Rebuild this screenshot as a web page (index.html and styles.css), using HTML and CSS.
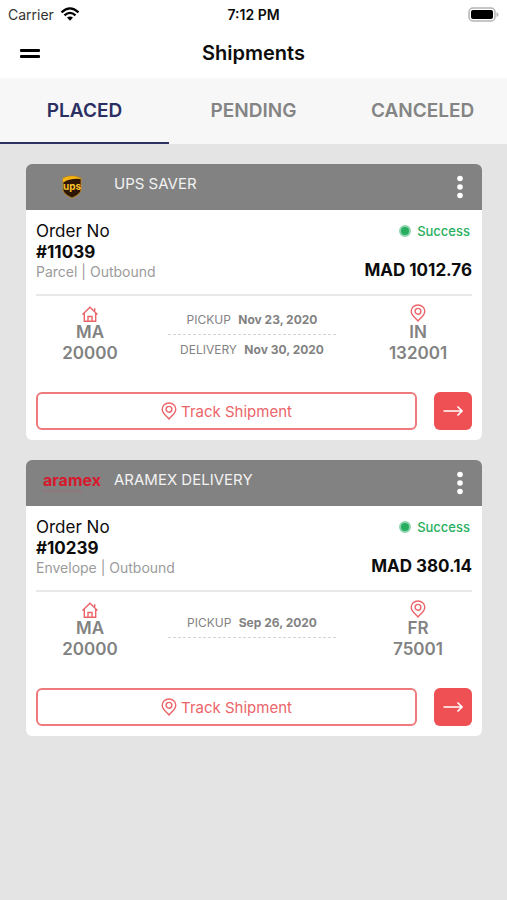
FILE: index.html
```html
<!DOCTYPE html>
<html lang="en">
<head>
<meta charset="utf-8">
<meta name="viewport" content="width=device-width, initial-scale=1">
<title>Shipments</title>
<link rel="stylesheet" href="styles.css">
</head>
<body>
<svg class="sprite" aria-hidden="true">
  <symbol id="pin" viewBox="0 0 16 18"><path d="M8 17C5 13.700 1.200 11 1.200 7.200a6.800 6.200 0 0 1 13.600 0C14.800 11 11 13.700 8 17Z"/><circle cx="8" cy="7.300" r="2.900"/></symbol>
  <symbol id="house" viewBox="0 0 18 16"><path d="M1.500 8.500 9 1.300l7.500 7.200M3.300 7v8.200h11.400V7M13.700 5V2.300M7 15v-4.500h4V15"/></symbol>
  <symbol id="arrow" viewBox="0 0 20 12"><path d="M0.500 6h18.500M14.500 1.500 19 6l-4.500 4.500"/></symbol>
  <symbol id="dots" viewBox="0 0 6 24"><circle cx="3" cy="3.500" r="2.800"/><circle cx="3" cy="12" r="2.800"/><circle cx="3" cy="20.500" r="2.800"/></symbol>
</svg>

<div class="status-bar">
  <div class="carrier">Carrier
    <svg width="20" height="14" viewBox="0 0 20 14" aria-hidden="true">
      <path d="M1.500 5.300Q10-2.500 18.500 5.300M4.500 8.300q5.500-4.800 11 0" fill="none" stroke="#000" stroke-width="2.300"/>
      <path d="M7 10.600q3-2.400 6 0L10 13.700Z"/>
    </svg>
  </div>
  <time class="clock">7:12 PM</time>
  <svg class="battery" width="31" height="15" viewBox="0 0 31 15" aria-hidden="true">
    <rect x="1" y="1" width="26" height="13" rx="4" fill="#fff" stroke="#b4b4b4" stroke-width="1.500"/>
    <rect x="3" y="3" width="22" height="9" rx="2"/>
    <path d="M28.500 5v5q2-1 2-2.500t-2-2.500Z" fill="#b4b4b4"/>
  </svg>
</div>

<header class="app-header">
  <button class="menu" type="button" aria-label="Menu"><span></span><span></span></button>
  <h1>Shipments</h1>
</header>

<nav class="tabs">
  <a class="tab active" href="#placed">PLACED</a>
  <a class="tab" href="#pending">PENDING</a>
  <a class="tab" href="#canceled">CANCELED</a>
</nav>

<main class="list">
  <article class="card">
    <header class="card-head">
      <div class="logo">
        <svg width="20" height="24" viewBox="0 0 20 24" role="img" aria-label="UPS">
          <path d="M1 3Q10-1 19 3v11.500q0 4.500-9 8.500-9-4-9-8.500Z" fill="#2e1605" stroke="#c98d14" stroke-width="0.800"/>
          <path d="M1.200 7.500V3.200Q10-.500 18.800 3.200 8-.500 1.200 7.500Z" fill="#f5b412"/>
          <path d="M1.200 7.500V3.200Q10-.500 18.800 3.200v.800Q8 3 1.200 7.500Z" fill="#f5b412"/>
          <text class="ups" x="10" y="15" text-anchor="middle">ups</text>
        </svg>
      </div>
      <h2>UPS SAVER</h2>
      <button class="more" type="button" aria-label="More options"><svg width="6" height="24"><use href="#dots"/></svg></button>
    </header>
    <div class="card-body">
      <div class="summary">
        <div>
          <p class="order">Order No</p>
          <p class="number">#11039</p>
          <p class="kind">Parcel | Outbound</p>
        </div>
        <div class="result">
          <p class="state"><span class="dot"></span>Success</p>
          <p class="price">MAD 1012.76</p>
        </div>
      </div>
      <div class="route">
        <div class="place"><svg width="18" height="16"><use href="#house"/></svg><p>MA</p><p>20000</p></div>
        <div class="dates">
          <p>PICKUP <b>Nov 23, 2020</b></p>
          <p>DELIVERY <b>Nov 30, 2020</b></p>
        </div>
        <div class="place"><svg width="16" height="18"><use href="#pin"/></svg><p>IN</p><p>132001</p></div>
      </div>
      <div class="actions">
        <button class="track" type="button"><svg width="16" height="18" aria-hidden="true"><use href="#pin"/></svg>Track Shipment</button>
        <button class="go" type="button" aria-label="Open shipment"><svg width="20" height="12"><use href="#arrow"/></svg></button>
      </div>
    </div>
  </article>

  <article class="card">
    <header class="card-head">
      <div class="logo">
        <svg width="68" height="24" viewBox="0 0 68 24" role="img" aria-label="Aramex">
          <text class="aramex" x="34" y="15" text-anchor="middle">aramex</text>
          <path d="M5 20h40" stroke="#9c6a70" stroke-width="1" stroke-dasharray="3 1"/>
        </svg>
      </div>
      <h2>ARAMEX DELIVERY</h2>
      <button class="more" type="button" aria-label="More options"><svg width="6" height="24"><use href="#dots"/></svg></button>
    </header>
    <div class="card-body">
      <div class="summary">
        <div>
          <p class="order">Order No</p>
          <p class="number">#10239</p>
          <p class="kind">Envelope | Outbound</p>
        </div>
        <div class="result">
          <p class="state"><span class="dot"></span>Success</p>
          <p class="price">MAD 380.14</p>
        </div>
      </div>
      <div class="route">
        <div class="place"><svg width="18" height="16"><use href="#house"/></svg><p>MA</p><p>20000</p></div>
        <div class="dates single">
          <p>PICKUP <b>Sep 26, 2020</b></p>
        </div>
        <div class="place"><svg width="16" height="18"><use href="#pin"/></svg><p>FR</p><p>75001</p></div>
      </div>
      <div class="actions">
        <button class="track" type="button"><svg width="16" height="18" aria-hidden="true"><use href="#pin"/></svg>Track Shipment</button>
        <button class="go" type="button" aria-label="Open shipment"><svg width="20" height="12"><use href="#arrow"/></svg></button>
      </div>
    </div>
  </article>
</main>
</body>
</html>
```
FILE: styles.css
```css
* { box-sizing: border-box; }
body {
  margin: 0;
  background: #e4e4e4;
  color: #0c0c0c;
  font-family: Inter, "Liberation Sans", sans-serif;
}
h1, h2, p { margin: 0; font-weight: 400; }
button { padding: 0; border: 0; background: none; font: inherit; cursor: pointer; }
svg { display: block; }
.sprite { display: none; }

.status-bar {
  display: grid;
  grid-template-columns: 1fr auto 1fr;
  align-items: center;
  height: 28px;
  padding: 0 8px;
  background: #fff;
  font-size: 14px;
}
.carrier { display: flex; align-items: center; gap: 6px; color: #333; }
.clock { font-weight: 600; }
.battery { justify-self: end; }

.app-header {
  display: grid;
  grid-template-columns: 20px 1fr 20px;
  align-items: center;
  height: 50px;
  padding: 0 20px;
  background: #fff;
}
.menu { display: grid; gap: 3px; }
.menu span { height: 3px; border-radius: 1px; background: #000; }
h1 { font-size: 20px; font-weight: 600; text-align: center; }

.tabs {
  display: grid;
  grid-template-columns: repeat(3, 1fr);
  height: 66px;
  background: #f7f7f7;
}
.tab {
  display: grid;
  place-items: center;
  border-bottom: 2px solid transparent;
  color: #848484;
  font-size: 19px;
  font-weight: 600;
  text-decoration: none;
}
.tab.active { border-bottom-color: #2b3263; color: #2b2f62; }

.list { display: grid; gap: 20px; padding: 20px 25px 20px 26px; }
.card { overflow: hidden; border-radius: 6px; background: #fff; }
.card-head {
  display: grid;
  grid-template-columns: 76px 1fr 24px;
  align-items: center;
  gap: 4px;
  height: 46px;
  padding: 0 10px 0 8px;
  background: #828282;
}
.logo { display: grid; place-items: center; }
.ups { fill: #f8c22c; font-size: 10px; font-weight: 700; }
.aramex { fill: #d8182c; font-size: 16px; font-weight: 700; }
h2 { padding-bottom: 6px; color: #f2f2f2; font-size: 15px; line-height: 18px; }
.more { display: grid; place-items: center; height: 32px; fill: #fff; }

.card-body { padding: 10px; }
.summary {
  display: flex;
  justify-content: space-between;
  padding: 1px 0 13px;
  border-bottom: 2px solid #e8e8e8;
}
.order, .number { font-size: 17px; line-height: 21px; }
.number { font-weight: 700; }
.kind { color: #9b9b9b; font-size: 14px; line-height: 18px; }
.result {
  display: flex;
  flex-direction: column;
  justify-content: space-between;
  align-items: flex-end;
}
.state {
  display: flex;
  align-items: center;
  gap: 6px;
  padding-right: 2px;
  color: #27ae60;
  font-size: 13px;
  font-weight: 500;
  line-height: 20px;
}
.dot { width: 12px; height: 12px; border: 2px solid #8dd5ac; border-radius: 50%; background: #27ae60; }
.price { font-size: 17px; font-weight: 700; line-height: 22px; }

.route {
  display: grid;
  grid-template-columns: 108px 1fr 108px;
  gap: 24px;
  height: 96px;
  padding-top: 8px;
}
.place {
  display: grid;
  grid-template-rows: 18px 21px 21px;
  justify-items: center;
  align-items: end;
  align-content: start;
  color: #828282;
  font-size: 17px;
  line-height: 21px;
  text-align: center;
}
.place svg, .track svg { fill: none; stroke: #eb6468; stroke-width: 1.4; }
.place p { font-weight: 600; }
.dates { padding: 1px 4px 0 0; color: #828282; font-size: 12px; text-align: center; }
.dates.single { padding-top: 8px; }
.dates p { line-height: 29px; white-space: nowrap; }
.dates p:first-child { border-bottom: 1px dashed #d4d4d4; }
.dates b { margin-left: 4px; }

.actions { display: flex; gap: 17px; }
.track {
  display: flex;
  flex: 1;
  justify-content: center;
  align-items: center;
  gap: 4px;
  height: 38px;
  border: 2px solid #ee7a7d;
  border-radius: 6px;
  color: #eb6468;
  font-size: 15px;
}
.go {
  display: grid;
  place-items: center;
  width: 38px;
  height: 38px;
  border-radius: 6px;
  background: #ef5053;
  fill: none;
  stroke: #fff;
  stroke-width: 1.6;
}
```
